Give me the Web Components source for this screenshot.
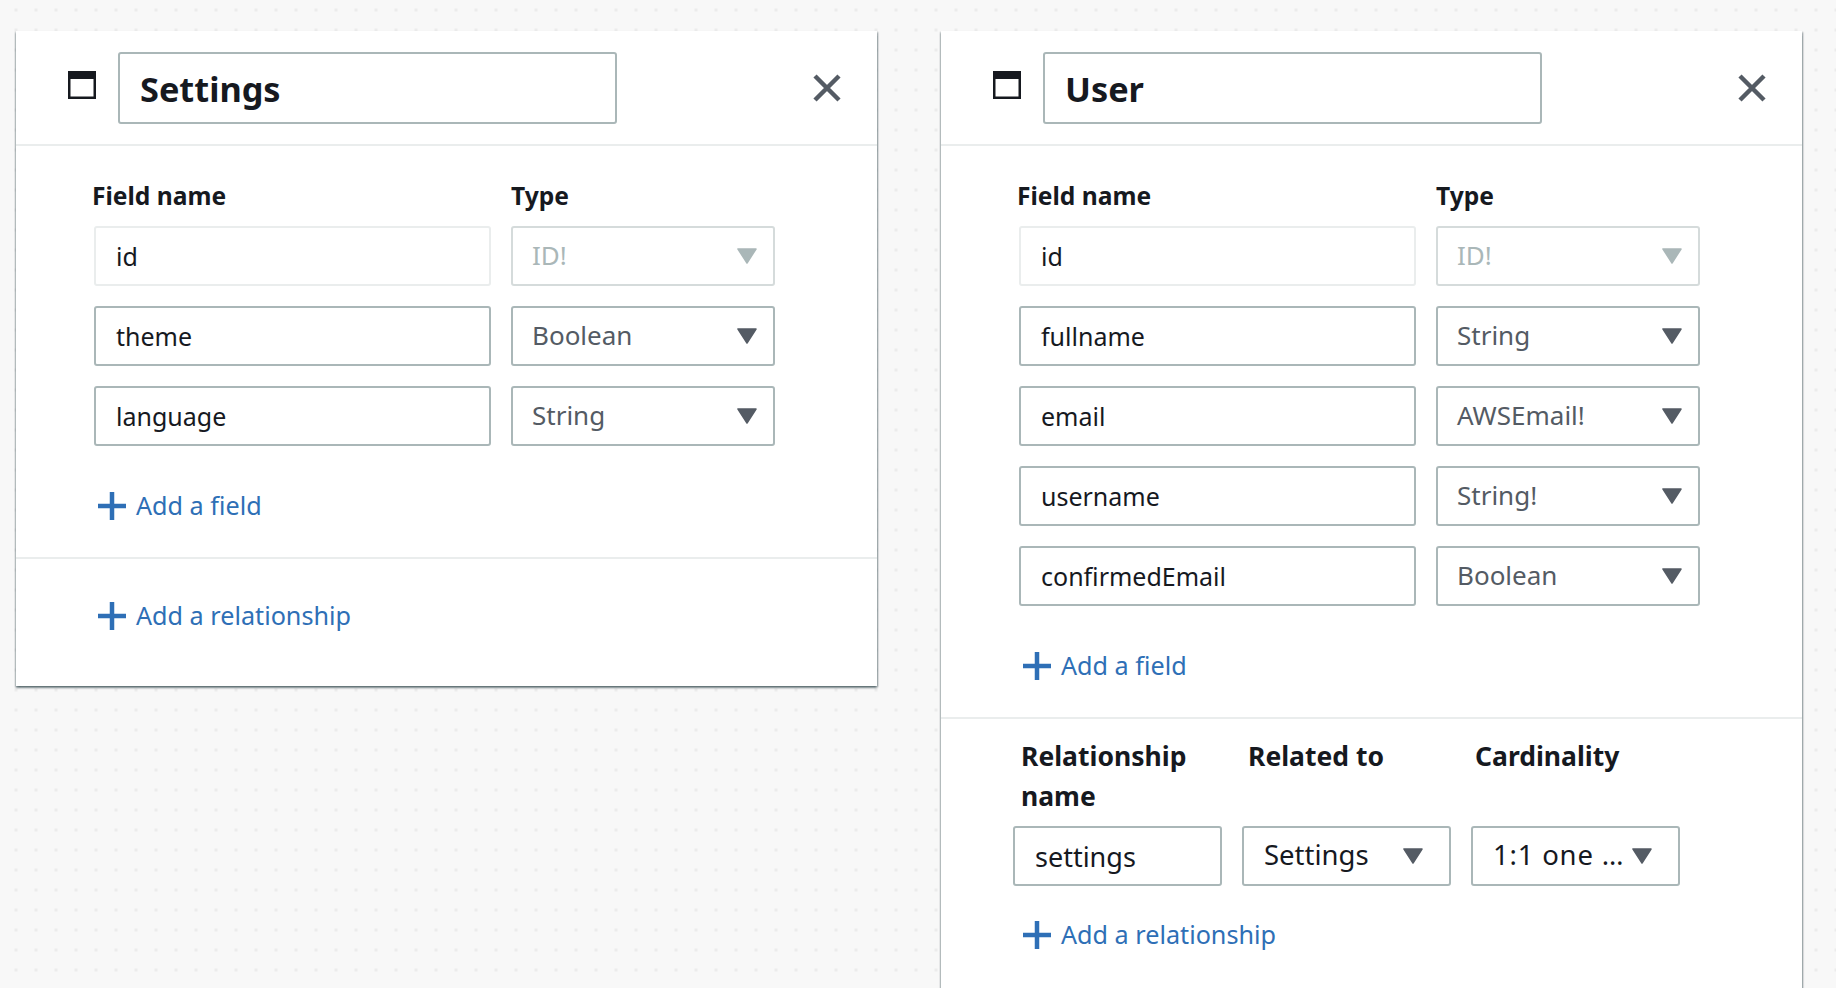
<!DOCTYPE html>
<html>
<head>
<meta charset="utf-8">
<title>Schema</title>
<style>
    html, body {
        margin: 0;
        height: 100%;
        overflow: hidden;
    }
    body {
        background-color: #f8f8f8;
        background-image: radial-gradient(circle at 1.5px 1.5px, #ececec 1.5px, transparent 1.7px);
        background-size: 20px 20px;
        background-position: 14.5px 8.5px;
        font-family: "Noto Sans", "Open Sans", sans-serif;
        color: #16191f;
    }
</style>
</head>
<body>
<schema-board>
    <model-card name="Settings">
        <field-list>
            <text-box disabled>id</text-box><select-box disabled>ID!</select-box>
            <text-box>theme</text-box><select-box>Boolean</select-box>
            <text-box>language</text-box><select-box>String</select-box>
        </field-list>
        <add-link>Add a field</add-link>
        <relation-list slot="relations" empty>
            <add-link>Add a relationship</add-link>
        </relation-list>
    </model-card>
    <model-card name="User">
        <field-list>
            <text-box disabled>id</text-box><select-box disabled>ID!</select-box>
            <text-box>fullname</text-box><select-box>String</select-box>
            <text-box>email</text-box><select-box>AWSEmail!</select-box>
            <text-box>username</text-box><select-box>String!</select-box>
            <text-box>confirmedEmail</text-box><select-box>Boolean</select-box>
        </field-list>
        <add-link>Add a field</add-link>
        <relation-list slot="relations">
            <text-box style="font-size: 27px">settings</text-box>
            <select-box dark>Settings</select-box>
            <select-box dark style="letter-spacing: .8px">1:1 one …</select-box>
            <add-link slot="add">Add a relationship</add-link>
        </relation-list>
    </model-card>
</schema-board>

<script>
class SchemaBoard extends HTMLElement {
    connectedCallback() {
        this.attachShadow({ mode: "open" });
        this.shadowRoot.innerHTML = `
            <style>
                :host {
                    display: flex;
                    align-items: flex-start;
                    gap: 64px;
                    padding: 31px 0 0 16px;
                }
            </style>
            <slot></slot>
        `;
    }
}

class ModelCard extends HTMLElement {
    connectedCallback() {
        this.attachShadow({ mode: "open" });
        const name = this.getAttribute("name");
        this.shadowRoot.innerHTML = `
            <style>
                :host {
                    display: block;
                    flex: none;
                    width: 861px;
                    background: #fff;
                    box-shadow: 0 2px 2px 0 rgba(0, 28, 36, .45),
                                1.5px 1px 1.5px 0 rgba(0, 28, 36, .25),
                                -1.5px 1px 1.5px 0 rgba(0, 28, 36, .25);
                }
                header {
                    display: flex;
                    align-items: center;
                    height: 113px;
                    padding: 0 36px 0 52px;
                    border-bottom: 2px solid #eaeded;
                }
                .window {
                    width: 28px;
                    height: 28px;
                    margin: -5px 22px 0 0;
                    flex: none;
                }
                .title {
                    box-sizing: border-box;
                    width: 499px;
                    height: 72px;
                    padding: 2px 20px 0;
                    display: flex;
                    align-items: center;
                    border: 2px solid #aab7b8;
                    border-radius: 3px;
                    font-size: 34.3px;
                    font-weight: 700;
                }
                .close {
                    width: 28px;
                    height: 28px;
                    margin-left: auto;
                }
                .fields {
                    padding: 30px 0 37px;
                    border-bottom: 2px solid #eaeded;
                }
            </style>
            <header>
                <svg class="window" viewBox="0 0 28 28">
                    <rect x="0" y="0" width="28" height="28" fill="#16191f"/>
                    <rect x="2.5" y="8" width="23" height="17.5" fill="#fff"/>
                </svg>
                <div class="title">${name}</div>
                <svg class="close" viewBox="0 0 28 28">
                    <path d="M2 2 L26 26 M26 2 L2 26" stroke="#545b64" stroke-width="4.5" fill="none"/>
                </svg>
            </header>
            <div class="fields"><slot></slot></div>
            <slot name="relations"></slot>
        `;
    }
}

class FieldList extends HTMLElement {
    connectedCallback() {
        this.attachShadow({ mode: "open" });
        this.shadowRoot.innerHTML = `
            <style>
                :host {
                    display: grid;
                    grid-template-columns: 397px 264px;
                    column-gap: 20px;
                    row-gap: 20px;
                    margin-left: 78px;
                    margin-bottom: 46px;
                }
                .label {
                    font-size: 24.6px;
                    line-height: 40px;
                    font-weight: 700;
                    margin: 0 0 -10px -2px;
                }
                .label + .label {
                    margin-left: 0;
                }
            </style>
            <div class="label">Field name</div>
            <div class="label">Type</div>
            <slot></slot>
        `;
    }
}

class RelationList extends HTMLElement {
    connectedCallback() {
        this.attachShadow({ mode: "open" });
        if (this.hasAttribute("empty")) {
            this.shadowRoot.innerHTML = `
                <style>
                    :host {
                        display: block;
                        padding: 43px 0 56px;
                    }
                </style>
                <slot></slot>
            `;
            return;
        }
        this.shadowRoot.innerHTML = `
            <style>
                :host {
                    display: block;
                    padding: 17px 0 60px;
                }
                .labels {
                    display: grid;
                    grid-template-columns: repeat(3, 205px);
                    column-gap: 22px;
                    margin-left: 80px;
                    font-size: 26.5px;
                    line-height: 40px;
                    font-weight: 700;
                }
                .row {
                    display: grid;
                    grid-template-columns: repeat(3, 209px);
                    column-gap: 20px;
                    margin: 10px 0 35px 72px;
                }
            </style>
            <div class="labels">
                <div>Relationship name</div>
                <div>Related to</div>
                <div>Cardinality</div>
            </div>
            <div class="row"><slot></slot></div>
            <slot name="add"></slot>
        `;
    }
}

class TextBox extends HTMLElement {
    connectedCallback() {
        this.attachShadow({ mode: "open" });
        this.shadowRoot.innerHTML = `
            <style>
                :host {
                    display: flex;
                    align-items: center;
                    box-sizing: border-box;
                    height: 60px;
                    padding: 0 20px;
                    border: 2px solid #aab7b8;
                    border-radius: 3px;
                    font-size: 25px;
                    color: #16191f;
                    background: #fff;
                }
                :host([disabled]) {
                    border-color: #eaeded;
                }
            </style>
            <slot></slot>
        `;
    }
}

class SelectBox extends HTMLElement {
    connectedCallback() {
        this.attachShadow({ mode: "open" });
        this.shadowRoot.innerHTML = `
            <style>
                :host {
                    display: flex;
                    align-items: center;
                    justify-content: space-between;
                    box-sizing: border-box;
                    height: 60px;
                    padding: 0 16px 0 19px;
                    border: 2px solid #aab7b8;
                    border-radius: 3px;
                    font-size: 26px;
                    color: #545b64;
                    background: #fff;
                }
                :host([dark]) {
                    color: #16191f;
                    padding: 0 26px 0 20px;
                    font-size: 27.5px;
                }
                :host([disabled]) {
                    color: #aab7b8;
                    border-color: #d5dbdb;
                }
                span {
                    margin-top: -3px;
                }
                svg {
                    width: 20px;
                    height: 16px;
                    flex: none;
                    color: #545b64;
                }
                :host([disabled]) svg {
                    color: #aab7b8;
                }
            </style>
            <span><slot></slot></span>
            <svg viewBox="0 0 20 16">
                <path d="M1 1 H19 L10 15 Z" fill="currentColor" stroke="currentColor" stroke-width="1.5" stroke-linejoin="round"/>
            </svg>
        `;
    }
}

class AddLink extends HTMLElement {
    connectedCallback() {
        this.attachShadow({ mode: "open" });
        this.shadowRoot.innerHTML = `
            <style>
                :host {
                    display: flex;
                    align-items: center;
                    gap: 10px;
                    height: 28px;
                    margin-left: 82px;
                    font-size: 25.2px;
                    color: #2e6fb6;
                }
                svg {
                    width: 28px;
                    height: 28px;
                    flex: none;
                }
                span {
                    margin-top: -2px;
                }
            </style>
            <svg viewBox="0 0 28 28">
                <path d="M14 0 V28 M0 14 H28" stroke="#2e6fb6" stroke-width="4.5" fill="none"/>
            </svg>
            <span><slot></slot></span>
        `;
    }
}

customElements.define("schema-board", SchemaBoard);
customElements.define("model-card", ModelCard);
customElements.define("field-list", FieldList);
customElements.define("relation-list", RelationList);
customElements.define("text-box", TextBox);
customElements.define("select-box", SelectBox);
customElements.define("add-link", AddLink);
</script>
</body>
</html>
